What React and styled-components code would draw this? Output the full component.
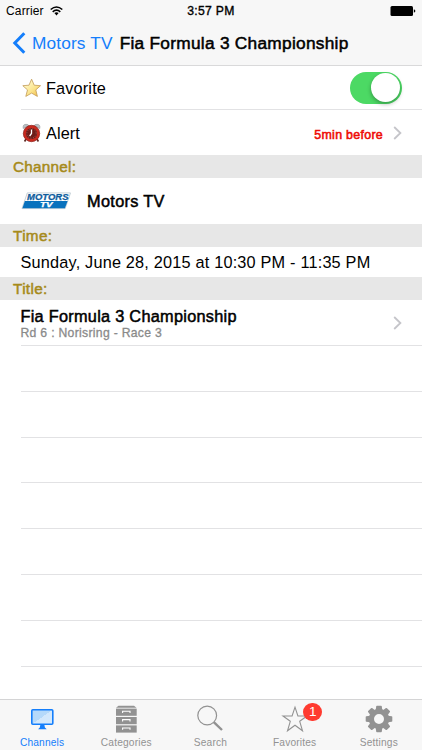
import React from 'react';
import styled, { createGlobalStyle } from 'styled-components';

const theme = {
  blue: '#147efb',
  gray: '#929292',
  bar: '#f7f7f7',
  section: '#e7e7e7',
  line: '#e2e2e4',
  gold: '#a68a1a',
  red: '#ee0c06',
  green: '#4cd964',
};

const GlobalStyle = createGlobalStyle`
  * {
    box-sizing: border-box;
  }

  body {
    margin: 0;
    background: #fff;
    font-family: 'Liberation Sans', Arial, sans-serif;
    color: #000;
  }
`;

const Screen = styled.div`
  width: 422px;
  height: 750px;
  display: flex;
  flex-direction: column;
  overflow: hidden;
  background: #fff;
`;

// Helvetica-like medium weight is a regular face with a thin stroke
const Label = styled.span`
  display: block;
  white-space: nowrap;
  font-size: ${({ $size }) => $size || 17.3}px;
  line-height: ${({ $line }) => $line || 20}px;
  letter-spacing: ${({ $track }) => $track || 0}px;
  color: ${({ $color }) => $color || '#000'};
  -webkit-text-stroke: ${({ $stroke }) => $stroke || 0}px currentColor;
`;

const AlertValue = styled(Label)`
  padding-top: 4px;
`;

const Header = styled.header`
  height: 66px;
  flex: none;
  background: ${theme.bar};
  border-bottom: 1px solid #d9d9da;
`;

const StatusBar = styled.div`
  height: 21px;
  display: grid;
  grid-template-columns: 1fr auto 1fr;
  align-items: center;
  padding: 1px 6px 0;
`;

const Carrier = styled.div`
  display: flex;
  align-items: center;
  gap: 6px;
`;

const BatteryIcon = styled.svg`
  justify-self: end;
`;

const NavBar = styled.nav`
  height: 44px;
  display: flex;
  align-items: center;
  padding: 0 12px 0 12px;
`;

const BackButton = styled.button`
  display: flex;
  align-items: center;
  gap: 6px;
  padding: 0;
  margin-right: 7px;
  border: 0;
  background: none;
  font-family: inherit;
`;

const Row = styled.div`
  flex: none;
  height: ${({ $height }) => $height || 46}px;
  display: flex;
  align-items: center;
  padding: 0 20px 0 0;
  margin-left: 20.5px;
  border-bottom: ${({ $line }) => ($line ? `1px solid ${theme.line}` : '0')};
`;

const TitleText = styled.div`
  padding-top: 2px;
`;

const RowIcon = styled.svg`
  flex: none;
  margin-right: 4.5px;
`;

const Right = styled.div`
  display: flex;
  align-items: center;
  gap: ${({ $gap }) => $gap || 0}px;
  margin-left: auto;
`;

const Switch = styled.div`
  width: 52px;
  height: 32px;
  display: flex;
  justify-content: flex-end;
  padding: 1.5px 2px;
  margin-right: 0.5px;
  border-radius: 16px;
  background: ${theme.green};
`;

const Knob = styled.div`
  width: 29px;
  height: 29px;
  border-radius: 50%;
  background: #fff;
  box-shadow: 0 2px 4px rgba(0, 0, 0, 0.3);
`;

const SectionTitle = styled.div`
  flex: none;
  height: ${({ $height }) => $height}px;
  display: flex;
  align-items: center;
  padding-left: 13px;
  background: ${theme.section};
`;

const ChannelLogo = styled.svg`
  flex: none;
  margin-right: 16.5px;
`;

const EmptyRow = styled(Row)`
  height: 45.8px;
`;

const Content = styled.main`
  height: 633px;
  flex: none;
  display: flex;
  flex-direction: column;
  overflow: hidden;
`;

const TabBar = styled.footer`
  flex: none;
  height: 51px;
  display: grid;
  grid-template-columns: repeat(5, 84.2px);
  background: ${theme.bar};
  border-top: 1px solid #d4d4d5;
`;

const Tab = styled.div`
  display: flex;
  flex-direction: column;
  align-items: center;
  padding-top: 4px;
`;

const TabIcon = styled.div`
  position: relative;
  width: 32px;
  height: 32px;
`;

const Badge = styled.span`
  position: absolute;
  top: -1.5px;
  left: 24.7px;
  width: 18.6px;
  height: 18.6px;
  border-radius: 50%;
  background: #ff3b30;
  color: #fff;
  font-size: 13.5px;
  line-height: 18.6px;
  text-align: center;
`;

function Wifi() {
  return (
    <svg width="13" height="10" viewBox="0 0 13 10" fill="none" stroke="#000" strokeWidth="1.6">
      <path d="M.7 3.5Q6.5-1.5 12.3 3.5" />
      <path d="M2.7 5.8Q6.5 2.5 10.3 5.8" />
      <path d="M4.4 7Q6.5 5.6 8.6 7L6.5 9.4Z" fill="#000" stroke="none" />
    </svg>
  );
}

function Battery() {
  return (
    <BatteryIcon width="26" height="10" viewBox="0 0 26 10">
      <rect x="0.5" y="0" width="22.5" height="10" rx="1.5" />
      <path d="M23.8 3.3q1.6.4 1.6 1.7t-1.6 1.7Z" />
    </BatteryIcon>
  );
}

function Chevron() {
  return (
    <svg width="9" height="14" viewBox="0 0 9 14" fill="none" stroke="#c5c5ca" strokeWidth="1.8">
      <path d="M1.2 1L7.4 7L1.2 13" />
    </svg>
  );
}

function GoldStar() {
  return (
    <RowIcon width="21" height="20" viewBox="0 0 21 20">
      <defs>
        <linearGradient id="gold" x1="0" y1="0" x2="1" y2="1">
          <stop offset="0.2" stopColor="#fff9c9" />
          <stop offset="0.6" stopColor="#fbe38a" />
          <stop offset="1" stopColor="#f0b63b" />
        </linearGradient>
      </defs>
      <path
        d="M10.6 1.2L13.2 7.2L19.5 7.7L14.8 11.9L16.4 18.4L10.6 15.1L4.8 18.4L6.5 11.9L1.8 7.7L8 7.2Z"
        fill="url(#gold)"
        stroke="#c39a55"
        strokeWidth="0.8"
        strokeLinejoin="round"
      />
    </RowIcon>
  );
}

function AlarmClock() {
  return (
    <RowIcon width="21" height="20" viewBox="0 0 21 20">
      <path d="M5 16L3.6 18.5M16 16L17.4 18.5" stroke="#5c2a24" strokeWidth="1.6" />
      <path d="M2.2 5.5Q1.4 1.4 5 1.3Q7.5 1.2 8.3 3Z" fill="#b9bfc3" stroke="#858b8f" strokeWidth=".5" />
      <path d="M18.8 5.5Q19.6 1.4 16 1.3Q13.5 1.2 12.7 3Z" fill="#b9bfc3" stroke="#858b8f" strokeWidth=".5" />
      <circle cx="10.5" cy="10.5" r="8.2" fill="#c8291e" stroke="#8b1d17" strokeWidth=".7" />
      <circle cx="10.5" cy="10.5" r="5.6" fill="#6d1c18" />
      <circle cx="10.5" cy="10.5" r="4.7" fill="none" stroke="#b98a84" strokeWidth=".8" strokeDasharray=".7 1.76" />
      <path d="M10.5 6.5V10.5L8.6 13" fill="none" stroke="#fff" strokeWidth="1.3" />
    </RowIcon>
  );
}

function MotorsLogo() {
  return (
    <ChannelLogo width="50" height="18" viewBox="0 0 50 18">
      <path d="M6.3 .9H49.5L44.2 16.6H1Z" fill="#fff" stroke="#b8c5ce" strokeWidth=".8" />
      <path d="M3.9 9H46.6L43.9 16.2H1.4Z" fill="#0871bd" />
      <g fontFamily="Liberation Sans, Arial, sans-serif" fontWeight="700" fontStyle="italic">
        <text
          x="6"
          y="8.3"
          fontSize="8.6"
          textLength="41.5"
          lengthAdjust="spacingAndGlyphs"
          fill="#0d5c9d"
          stroke="#0d5c9d"
          strokeWidth=".25"
        >
          MOTORS
        </text>
        <text x="19" y="15.2" fontSize="7" textLength="12.5" lengthAdjust="spacingAndGlyphs" fill="#fff" stroke="#fff" strokeWidth=".25">
          TV
        </text>
      </g>
    </ChannelLogo>
  );
}

function MonitorIcon() {
  return (
    <svg width="32" height="32" viewBox="0 0 32 32">
      <defs>
        <linearGradient id="glass" x1="0" y1="0" x2="1" y2="1">
          <stop offset="0.5" stopColor="#b5d9fa" />
          <stop offset="0.5" stopColor="#d3e8fc" />
        </linearGradient>
      </defs>
      <rect x="5.8" y="5.8" width="21" height="14.4" rx="1" fill="url(#glass)" stroke={theme.blue} strokeWidth="1.6" />
      <path d="M14.3 21H18.4L18.9 23.6L20.7 25.2H12.1L13.8 23.6Z" fill={theme.blue} />
    </svg>
  );
}

function CabinetIcon() {
  return (
    <svg width="32" height="32" viewBox="0 0 32 32" fill={theme.gray}>
      <path d="M8.5 1.7H24L26.5 3.8H6Z" />
      {[4.6, 13, 21.4].map((y) => (
        <g key={y}>
          <rect x="6" y={y} width="20.7" height="7.2" />
          <path d={`M12.6 ${y + 4.4}V${y + 2.6}H20V${y + 4.4}`} fill="none" stroke="#fff" strokeWidth="1.1" />
        </g>
      ))}
    </svg>
  );
}

function SearchIcon() {
  return (
    <svg width="32" height="32" viewBox="0 0 32 32" fill="none" stroke={theme.gray}>
      <circle cx="13.2" cy="11.5" r="9.4" strokeWidth="1.2" />
      <path d="M19.8 18.2L28 26" strokeWidth="2.4" />
    </svg>
  );
}

function StarIcon() {
  return (
    <svg width="32" height="32" viewBox="0 0 32 32" fill="none" stroke={theme.gray} strokeWidth="1.1">
      <path d="M16 3.2L18.9 12H28L20.7 17.3L23.5 26.8L16 21.2L8.5 26.8L11.3 17.3L4 12H13.1Z" />
    </svg>
  );
}

function GearIcon() {
  const teeth = [0, 45, 90, 135, 180, 225, 270, 315];
  return (
    <svg width="32" height="32" viewBox="0 0 32 32" fill={theme.gray}>
      <circle cx="16" cy="15" r="7.6" fill="none" stroke={theme.gray} strokeWidth="5.2" />
      {teeth.map((angle) => (
        <path
          key={angle}
          d="M12.7 6L13.2 2.4Q13.3 1.7 14 1.7H18Q18.7 1.7 18.8 2.4L19.3 6Z"
          transform={`rotate(${angle} 16 15)`}
        />
      ))}
    </svg>
  );
}

const tabs = [
  { label: 'Channels', Icon: MonitorIcon, active: true },
  { label: 'Categories', Icon: CabinetIcon },
  { label: 'Search', Icon: SearchIcon },
  { label: 'Favorites', Icon: StarIcon, badge: 1 },
  { label: 'Settings', Icon: GearIcon },
];

export default function App() {
  return (
    <>
      <GlobalStyle />
      <Screen>
        <Header>
          <StatusBar>
            <Carrier>
              <Label $size={12} $line={14} $track={0.15}>Carrier</Label>
              <Wifi />
            </Carrier>
            <Label $size={12.2} $line={14} $track={0.3} $stroke={0.35}>3:57 PM</Label>
            <Battery />
          </StatusBar>
          <NavBar>
            <BackButton>
              <svg width="14" height="22" viewBox="0 0 14 22" fill="none" stroke={theme.blue} strokeWidth="3">
                <path d="M12.3 1.3L2.8 11L12.3 20.7" />
              </svg>
              <Label $track={0.14} $color={theme.blue}>Motors TV</Label>
            </BackButton>
            <Label $track={0.27} $stroke={0.5}>Fia Formula 3 Championship</Label>
          </NavBar>
        </Header>

        <Content>
          <Row $height={44} $line>
            <GoldStar />
            <Label $size={16.3} $track={0.15}>Favorite</Label>
            <Right>
              <Switch>
                <Knob />
              </Switch>
            </Right>
          </Row>
          <Row $height={45}>
            <AlarmClock />
            <Label $size={16.3} $track={0.1}>Alert</Label>
            <Right $gap={10}>
              <AlertValue $size={12.4} $track={0.3} $color={theme.red} $stroke={0.55}>5min before</AlertValue>
              <Chevron />
            </Right>
          </Row>

          <SectionTitle $height={23}>
            <Label $size={15.3} $track={0.25} $color={theme.gold} $stroke={0.5}>Channel:</Label>
          </SectionTitle>
          <Row $height={46}>
            <MotorsLogo />
            <Label $size={16.3} $track={0.33} $stroke={0.5}>Motors TV</Label>
          </Row>

          <SectionTitle $height={23}>
            <Label $size={15.3} $track={0.35} $color={theme.gold} $stroke={0.5}>Time:</Label>
          </SectionTitle>
          <Row $height={30}>
            <Label $size={16.3} $track={0.19}>Sunday, June 28, 2015 at 10:30 PM - 11:35 PM</Label>
          </Row>

          <SectionTitle $height={23}>
            <Label $size={15.3} $track={0.35} $color={theme.gold} $stroke={0.5}>Title:</Label>
          </SectionTitle>
          <Row $height={46} $line>
            <TitleText>
              <Label $size={16.3} $line={19} $track={0.28} $stroke={0.5}>Fia Formula 3 Championship</Label>
              <Label $size={12.2} $line={14} $track={0.3} $color="#8a8a8a" $stroke={0.3}>Rd 6 : Norisring - Race 3</Label>
            </TitleText>
            <Right>
              <Chevron />
            </Right>
          </Row>

          {Array.from({ length: 7 }, (_, i) => (
            <EmptyRow key={i} $line />
          ))}
        </Content>

        <TabBar>
          {tabs.map(({ label, Icon, active, badge }) => (
            <Tab key={label}>
              <TabIcon>
                <Icon />
                {badge && <Badge>{badge}</Badge>}
              </TabIcon>
              <Label $size={10.2} $line={14} $track={0.17} $color={active ? theme.blue : theme.gray}>
                {label}
              </Label>
            </Tab>
          ))}
        </TabBar>
      </Screen>
    </>
  );
}
